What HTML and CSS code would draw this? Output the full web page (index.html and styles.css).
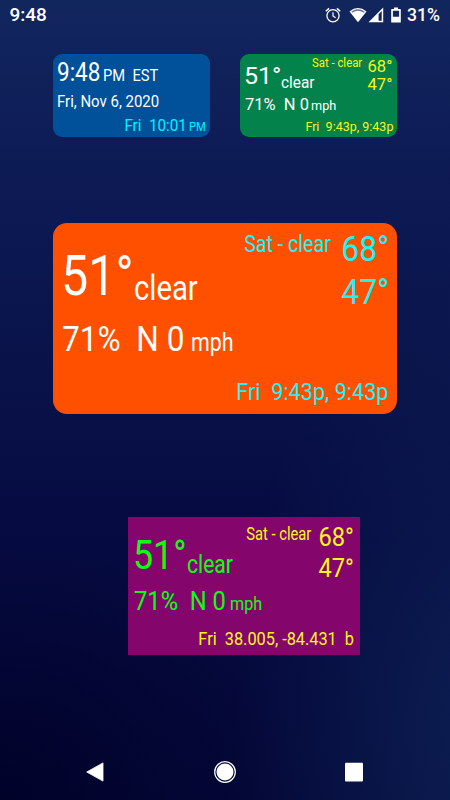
FILE: index.html
```html
<!DOCTYPE html>
<html lang="en">
<head>
<meta charset="utf-8">
<title>Home screen widgets</title>
<link rel="stylesheet" href="styles.css">
</head>
<body>
<div class="screen">
  <header class="status">
    <span class="status-time">9:48</span>
    <div class="status-icons">
      <svg class="alarm" width="16" height="16" viewBox="0 0 16 16" fill="none" stroke="#fff">
        <circle cx="8" cy="8.7" r="6.1" stroke-width="1.3"/>
        <path d="M8 5.2V9l2.6 1.8" stroke-width="1.2"/>
        <path d="M.8 4.2 4.1 1.4M15.2 4.2 11.9 1.4" stroke-width="1.5"/>
      </svg>
      <svg class="wifi" width="18" height="16" viewBox="0 0 18 16">
        <path d="M9 15.2.5 4.5Q9-2.3 17.5 4.5Z" fill="#fff"/>
        <path d="M2.3 4.7Q9-.1 15.7 4.7L14.9 5.7Q9 1.8 3.1 5.7Z" fill="#11235b" opacity=".65"/>
      </svg>
      <svg class="signal" width="16" height="16" viewBox="0 0 16 16">
        <path fill="#fff" fill-rule="evenodd" d="M15.2.5V15.2H.5ZM13.7 4.1 10.6 7.2V13.7h3.1Z"/>
      </svg>
      <svg class="battery" width="10" height="16" viewBox="0 0 10 16">
        <path fill="#fff" fill-rule="evenodd" d="M3 .5h4V2h2.2q.6 0 .6.6V15q0 .6-.6.6H.8Q.2 15.6.2 15V2.6Q.2 2 .8 2H3ZM1.9 3.8v6h6.2v-6Z"/>
      </svg>
      <span class="status-percent">31%</span>
    </div>
  </header>

  <main class="home">
    <div class="pair">
      <section class="card clock">
        <div class="row r1"><span class="seg time">9:48</span><span class="seg zone">PM  EST</span></div>
        <div class="row r2"><span class="seg date">Fri, Nov 6, 2020</span></div>
        <div class="row r3"><span class="seg alarm-time">Fri  10:01</span><span class="seg alarm-pm">PM</span></div>
      </section>
      <section class="card weather green">
        <div class="upper">
          <div class="now">
            <div class="row"><span class="seg temp">51°</span><span class="seg sky">clear</span></div>
            <div class="row wind"><span class="seg humid">71%  N 0</span><span class="seg unit">mph</span></div>
          </div>
          <div class="next">
            <div class="row"><span class="seg day">Sat - clear</span><span class="seg deg">68°</span></div>
            <div class="row low"><span class="seg deg">47°</span></div>
          </div>
        </div>
        <div class="row foot"><span class="seg">Fri  9:43p, 9:43p</span></div>
      </section>
    </div>

    <section class="card weather orange">
      <div class="upper">
        <div class="now">
          <div class="row"><span class="seg temp">51°</span><span class="seg sky">clear</span></div>
          <div class="row wind"><span class="seg humid">71%  N 0</span><span class="seg unit">mph</span></div>
        </div>
        <div class="next">
          <div class="row"><span class="seg day">Sat - clear</span><span class="seg deg">68°</span></div>
          <div class="row low"><span class="seg deg">47°</span></div>
        </div>
      </div>
      <div class="row foot"><span class="seg">Fri  9:43p, 9:43p</span></div>
    </section>

    <section class="card weather purple">
      <div class="upper">
        <div class="now">
          <div class="row"><span class="seg temp">51°</span><span class="seg sky">clear</span></div>
          <div class="row wind"><span class="seg humid">71%  N 0</span><span class="seg unit">mph</span></div>
        </div>
        <div class="next">
          <div class="row"><span class="seg day">Sat - clear</span><span class="seg deg">68°</span></div>
          <div class="row low"><span class="seg deg">47°</span></div>
        </div>
      </div>
      <div class="row foot"><span class="seg">Fri  38.005, -84.431  b</span></div>
    </section>
  </main>

  <nav class="nav">
    <svg width="24" height="24" viewBox="0 0 24 24"><path d="M3.7 12 20 2.9V21.1Z" fill="#fff" stroke="#fff" stroke-width=".8" stroke-linejoin="round"/></svg>
    <svg width="24" height="24" viewBox="0 0 24 24"><circle cx="12" cy="12" r="10.3" fill="none" stroke="#fff" stroke-width="1.2"/><circle cx="12" cy="12" r="8.5" fill="#fff"/></svg>
    <svg width="24" height="24" viewBox="0 0 24 24"><rect x="3" y="2.8" width="18" height="18.6" rx="1" fill="#fff"/></svg>
  </nav>
</div>
</body>
</html>
```
FILE: styles.css
```css
* { box-sizing: border-box; }

body {
  margin: 0;
  font-family: Roboto, "Liberation Sans", sans-serif;
  color: #fff;
}

.screen {
  width: 450px;
  height: 800px;
  overflow: hidden;
  display: flex;
  flex-direction: column;
  background:
    radial-gradient(ellipse 300px 260px at 0% 100%, rgba(0, 0, 38, .8), rgba(0, 0, 38, 0)),
    radial-gradient(ellipse 240px 480px at 105% 92%, rgba(15, 36, 88, .75), rgba(15, 36, 88, 0)),
    linear-gradient(180deg, #12265e 0%, #0d1b55 20%, #09134a 45%, #050a40 68%, #040838 100%);
}

/* Status bar */
.status {
  flex: none;
  height: 30px;
  padding: 0 10px 0 9.5px;
  display: flex;
  justify-content: space-between;
  align-items: center;
  font-size: 19px;
  font-weight: 500;
  line-height: 30px;
}
.status-icons { display: flex; align-items: center; }
.wifi { margin-left: 8px; }
.signal { margin-left: 1px; }
.battery { margin-left: 7.5px; }
.status-percent { margin-left: 6px; font-size: 17.6px; }

/* Shared text pieces */
.card { flex: none; }
.row { display: flex; align-items: baseline; line-height: 1; }
.seg { flex: none; display: block; white-space: pre; line-height: 1; transform-origin: 0 50%; }

.home { flex: none; height: 713px; padding: 23.7px 53px 0; }
.pair { display: flex; gap: 30px; height: 83.6px; }
.pair .card { width: 157px; height: 83.6px; border-radius: 9px; }

/* Clock widget */
.clock { background: #00509a; padding: 6.6px 4.5px 0 3.7px; }
.clock .r2 { margin-top: 7.7px; }
.clock .r3 { margin-top: 8.4px; justify-content: flex-end; color: #00f4ff; }
.clock .r3 .seg { transform-origin: 100% 50%; }
.time { font-size: 25px; transform: scaleX(.9); }
.zone { font-size: 16px; margin-left: -1.9px; transform: scaleX(.92); }
.date { font-size: 17px; transform: scaleX(.88); }
.alarm-time { font-size: 16.5px; transform: scaleX(.92); }
.alarm-pm { font-size: 12.5px; transform: scaleX(.89); }

/* Weather widgets */
.upper { display: flex; }
.now { flex: 0 0 50%; }
.next { flex: 1 1 0; min-width: 0; }
.next .row, .foot { justify-content: flex-end; }
.next .seg, .foot .seg { transform-origin: 100% 50%; }

.green { background: #04824b; }
.green .upper { height: 67.8px; }
.green .now { padding: 10px 0 0 4px; }
.green .wind { margin: 8.2px 0 0 .5px; }
.green .next { padding: 4.9px 4.2px 0 0; }
.green .low { margin-top: 2.2px; }
.green .temp { font-size: 24.5px; transform: scaleX(1.02); }
.green .sky { font-size: 16.3px; margin-left: .5px; transform: translateY(4px) scaleX(.945); }
.green .humid { font-size: 17px; transform: scaleX(.97); }
.green .unit { font-size: 13.5px; margin-left: .5px; transform: scaleX(.94); }
.green .deg { font-size: 16.3px; transform: scaleX(1.02); }
.green .day { font-size: 12.5px; margin-right: 6px; transform: translateY(-5px) scaleX(.91); }
.green .foot { font-size: 12.5px; padding-right: 3.6px; }
.green .next, .green .foot { color: #f4f81c; }

.orange { height: 191.5px; margin-top: 85.7px; border-radius: 14px; background: #ff5000; }
.orange .upper { height: 158px; }
.orange .now { padding: 26px 0 0 8px; }
.orange .wind { margin: 18px 0 0 1px; }
.orange .next { padding: 8.6px 8.2px 0 0; }
.orange .low { margin-top: 7.8px; }
.orange .temp { font-size: 55px; transform: scaleX(.88); }
.orange .sky { font-size: 35px; margin-left: -9.7px; transform: translateY(5.4px) scaleX(.835); }
.orange .humid { font-size: 35.5px; transform: scaleX(.89); }
.orange .unit { font-size: 25.5px; margin-left: -9px; transform: scaleX(.84); }
.orange .deg { font-size: 35.5px; transform: scaleX(.9); }
.orange .day { font-size: 23.5px; margin-right: 5px; transform: translateY(-8.7px) scaleX(.835); }
.orange .foot { font-size: 23.5px; padding-right: 8.4px; }
.orange .foot .seg { transform: scaleX(.92); }
.orange .next, .orange .foot { color: #1df5f5; }

.purple { width: 232px; height: 138px; margin: 102.8px 0 0 75px; background: #84066c; color: #0cff0c; }
.purple .upper { height: 113.4px; }
.purple .now { padding: 18.4px 0 0 5.2px; }
.purple .wind { margin: 12.5px 0 0 .4px; }
.purple .next { padding: 7px 6px 0 0; }
.purple .low { margin-top: 5px; }
.purple .temp { font-size: 40px; transform: scaleX(.895); }
.purple .sky { font-size: 25.4px; margin-left: -6.2px; transform: translateY(3.7px) scaleX(.83); }
.purple .humid { font-size: 26px; transform: scaleX(.912); }
.purple .unit { font-size: 19.2px; margin-left: -4.7px; transform: scaleX(.84); }
.purple .deg { font-size: 26px; transform: scaleX(.91); }
.purple .day { font-size: 17.5px; margin-right: 4.2px; transform: translateY(-5.7px) scaleX(.84); }
.purple .foot { font-size: 17.5px; padding-right: 5.5px; }
.purple .foot .seg { transform: scaleX(.932); }
.purple .next, .purple .foot { color: #fdf51e; }

/* Navigation bar */
.nav {
  flex: none;
  height: 57px;
  padding: 0 84px 0 83px;
  display: flex;
  justify-content: space-between;
  align-items: center;
}
```
